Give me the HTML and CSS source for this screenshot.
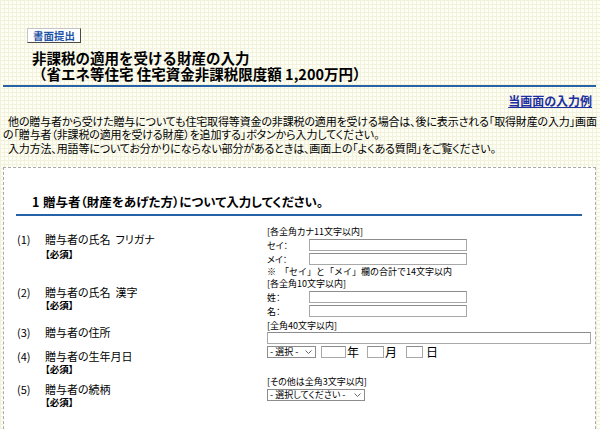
FILE: index.html
```html
<!DOCTYPE html>
<html lang="ja">
<head>
<meta charset="utf-8">
<title>非課税の適用を受ける財産の入力</title>
<link rel="stylesheet" href="styles.css">
</head>
<body>
<div class="page">
  <div class="header">
    <div class="btn">書面提出</div>
    <h1 class="title">非課税の適用を受ける財産の入力<br>（省エネ等住宅 住宅資金非課税限度額 1,200万円）</h1>
  </div>
  <div class="rule"></div>
  <div class="example"><a href="#">当画面の入力例</a></div>
  <p class="note">他の贈与者から受けた贈与についても住宅取得等資金の非課税の適用を受ける場合は、後に表示される「取得財産の入力」画面<br>の「贈与者（非課税の適用を受ける財産）を追加する」ボタンから入力してください。</p>
  <p class="note note2">入力方法、用語等についてお分かりにならない部分があるときは、画面上の「よくある質問」をご覧ください。</p>

  <div class="box">
    <h2 class="sec"><span class="secno">1</span>贈与者（財産をあげた方）について入力してください。</h2>
    <div class="rows">
      <div class="row">
        <div class="left pad6">
          <div class="lbl"><span class="num">(1)</span><span>贈与者の氏名&nbsp;&nbsp;フリガナ</span></div>
          <div class="req h16">【必須】</div>
        </div>
        <div class="field">
          <div class="hd">[各全角カナ11文字以内]</div>
          <div class="line"><span class="fl">セイ：</span><span class="inp w158"></span></div>
          <div class="line"><span class="fl">メイ：</span><span class="inp w158"></span></div>
          <div class="hd nopalt">※&nbsp;&nbsp;「セイ」と「メイ」欄の合計で14文字以内</div>
        </div>
      </div>
      <div class="row">
        <div class="left pad7">
          <div class="lbl"><span class="num">(2)</span><span>贈与者の氏名&nbsp;&nbsp;漢字</span></div>
          <div class="req">【必須】</div>
        </div>
        <div class="field">
          <div class="hd">[各全角10文字以内]</div>
          <div class="line"><span class="fl">姓：</span><span class="inp w158"></span></div>
          <div class="line"><span class="fl">名：</span><span class="inp w158"></span></div>
        </div>
      </div>
      <div class="row">
        <div class="left pad7">
          <div class="lbl"><span class="num">(3)</span><span>贈与者の住所</span></div>
        </div>
        <div class="field pt2">
          <div class="hd">[全角40文字以内]</div>
          <div class="line h12"><span class="inp w324"></span></div>
        </div>
      </div>
      <div class="row">
        <div class="left pad5">
          <div class="lbl"><span class="num">(4)</span><span>贈与者の生年月日</span></div>
          <div class="req h13">【必須】</div>
        </div>
        <div class="field pt1">
          <div class="line">
            <span class="sel w49"><span>-&nbsp;選択&nbsp;-</span><svg width="7" height="4" viewBox="0 0 7 4"><path d="M0.5 0.5 L3.5 3.5 L6.5 0.5" fill="none" stroke="#666" stroke-width="1"/></svg></span>
            <span class="inp w25 ml5"></span><span class="unit ml1">年</span>
            <span class="inp w17 ml8"></span><span class="unit ml1">月</span>
            <span class="inp w17 ml9"></span><span class="unit ml3">日</span>
          </div>
        </div>
      </div>
      <div class="row">
        <div class="left pad7">
          <div class="lbl h13"><span class="num">(5)</span><span>贈与者の続柄</span></div>
          <div class="req h13">【必須】</div>
        </div>
        <div class="field">
          <div class="hd">[その他は全角3文字以内]</div>
          <div class="line">
            <span class="sel w98"><span>-&nbsp;選択してください&nbsp;-</span><svg width="7" height="4" viewBox="0 0 7 4"><path d="M0.5 0.5 L3.5 3.5 L6.5 0.5" fill="none" stroke="#666" stroke-width="1"/></svg></span>
          </div>
        </div>
      </div>
    </div>
  </div>
</div>
</body>
</html>
```
FILE: styles.css
```css
html, body {
  margin: 0;
  padding: 0;
}
body {
  font-family: "Noto Sans CJK JP", "Noto Sans", sans-serif;
  color: #000;
  background-color: #fefef4;
  background-image:
    linear-gradient(90deg, #f1f1dc 1px, transparent 1px),
    linear-gradient(#f1f1dc 1px, transparent 1px);
  background-size: 4px 4px;
  overflow: hidden;
  height: 429px;
}
.page {
  padding: 0 4px 0 3px;
}
.header {
  padding-top: 28px;
}
.btn {
  width: 54px;
  height: 15px;
  margin-left: 24px;
  box-sizing: border-box;
  border: 1px solid;
  border-color: #c4c4c4 #4a4a4a #4a4a4a #c4c4c4;
  background: #fff;
  color: #1f55a6;
  font-size: 10.5px;
  font-weight: bold;
  line-height: 13px;
  text-align: center;
}
.title {
  margin: 7px 0 0;
  padding-left: 29px;
  font-size: 14.5px;
  font-weight: bold;
  line-height: 16px;
  white-space: nowrap;
}
.rule {
  height: 2px;
  margin-top: 3px;
  background: #2662a6;
}
.example {
  margin-top: 5px;
  padding-right: 4px;
  text-align: right;
  line-height: 14px;
}
.example a {
  color: #1e2fa0;
  font-size: 12px;
  font-weight: bold;
  text-decoration: underline;
  font-feature-settings: "palt";
}
.note {
  margin: 7px 0 0;
  font-size: 11px;
  line-height: 13px;
  letter-spacing: -0.15px;
  white-space: nowrap;
  text-indent: 5px;
  font-feature-settings: "palt";
}
.note2 {
  margin-top: 1px;
}
.box {
  margin-top: 12px;
  height: 300px;
  border: 1px dashed #aaaaaa;
  background: #fff;
}
.sec {
  margin: 26px 13px 0 12px;
  padding: 0 0 4px 16px;
  border-bottom: 2px solid #2662a6;
  font-size: 12.5px;
  font-weight: bold;
  line-height: 16px;
  white-space: nowrap;
  font-feature-settings: "palt";
}
.secno {
  display: inline-block;
  width: 11px;
}
.rows {
  margin-top: 10px;
}
.row {
  display: flex;
}
.left {
  width: 263px;
  flex: none;
  padding-left: 13px;
  box-sizing: border-box;
  font-size: 11px;
  font-feature-settings: "palt";
}
.pad5 { padding-top: 5px; }
.pad6 { padding-top: 6px; }
.pad7 { padding-top: 7px; }
.lbl {
  display: flex;
  height: 14px;
  line-height: 14px;
  white-space: nowrap;
}
.num {
  width: 28px;
  flex: none;
}
.req {
  padding-left: 28px;
  height: 12px;
  line-height: 12px;
  font-size: 9.5px;
  font-weight: bold;
}
.h16 { height: 16px; line-height: 16px; }
.h13 { height: 13px; line-height: 13px; }
.h12 { height: 12px; line-height: 12px; }
.field {
  flex: 1;
  font-size: 9px;
  font-feature-settings: "palt";
}
.pt1 { padding-top: 1px; }
.pt2 { padding-top: 2px; }
.hd {
  height: 12px;
  line-height: 12px;
  white-space: nowrap;
}
.hd.nopalt {
  font-feature-settings: normal;
}
.line {
  display: flex;
  align-items: center;
  height: 14px;
  white-space: nowrap;
}
.line.h12 {
  height: 12px;
}
.fl {
  width: 42px;
  flex: none;
}
.inp {
  display: block;
  flex: none;
  height: 12px;
  box-sizing: border-box;
  border: 1px solid #a8a8a8;
  border-top-color: #8c8c8c;
  background: #fff;
}
.w158 { width: 158px; }
.w324 { width: 324px; }
.w25 { width: 25px; }
.w17 { width: 17px; }
.w49 { width: 49px; }
.w98 { width: 98px; }
.ml1 { margin-left: 1px; }
.ml3 { margin-left: 3px; }
.ml5 { margin-left: 5px; }
.ml8 { margin-left: 8px; }
.ml9 { margin-left: 9px; }
.unit {
  font-size: 12px;
  line-height: 14px;
}
.sel {
  display: flex;
  flex: none;
  align-items: center;
  justify-content: space-between;
  height: 12px;
  box-sizing: border-box;
  padding: 0 3px 0 2px;
  border: 1px solid #8c8c8c;
  background: #fff;
  font-size: 9px;
  line-height: 10px;
}
.sel svg {
  display: block;
}
```
